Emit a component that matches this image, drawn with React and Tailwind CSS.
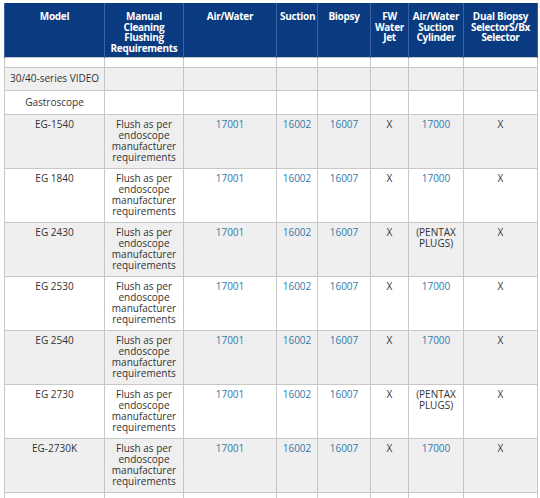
const headers = [
  "Model",
  "Manual Cleaning Flushing Requirements",
  "Air/Water",
  "Suction",
  "Biopsy",
  "FW Water Jet",
  "Air/Water Suction Cylinder",
  "Dual Biopsy SelectorS/Bx Selector",
];

const widths = ["w-[100px]", "w-[79px]", "w-[93px]", "w-[41px]", "w-[53px]", "w-[38px]", "w-[55px]", "w-[74px]"];

const models = [
  { name: "EG-1540", cyl: "17000" },
  { name: "EG 1840", cyl: "17000" },
  { name: "EG 2430", cyl: "(PENTAX PLUGS)" },
  { name: "EG 2530", cyl: "17000" },
  { name: "EG 2540", cyl: "17000" },
  { name: "EG 2730", cyl: "(PENTAX PLUGS)" },
  { name: "EG-2730K", cyl: "17000" },
];

const cell = "border border-[#c8c8c8] text-center px-1";
const top = `${cell} align-top pt-[4px]`;
const link = "text-[#3479ab]";

export default function App() {
  return (
    <div className="w-[540px] h-[498px] overflow-hidden bg-white pt-[3px] pl-[4px] font-['Open_Sans','Noto_Sans',sans-serif] text-[10px] leading-[11px] text-[#333]">
      <table className="table-fixed border-collapse w-[533px]">
        <colgroup>
          {widths.map((w, i) => (
            <col key={i} className={w} />
          ))}
        </colgroup>
        <thead>
          <tr className="h-[54px] bg-[#0a3a80]">
            {headers.map((h) => (
              <th
                key={h}
                className="border-x border-[#3a62a0] border-y-0 align-top text-center px-[3px] pt-[8px] font-bold text-white leading-[10.7px] tracking-[-0.3px]"
              >
                {h}
              </th>
            ))}
          </tr>
        </thead>
        <tbody>
          <tr className="h-[10px] bg-white">
            {headers.map((h) => (
              <td key={h} className={cell}></td>
            ))}
          </tr>
          <tr className="h-[23px] bg-[#efefef]">
            <td className={`${cell} align-middle whitespace-nowrap`}>30/40-series VIDEO</td>
            {headers.slice(1).map((h) => (
              <td key={h} className={cell}></td>
            ))}
          </tr>
          <tr className="h-[24px] bg-white">
            <td className={`${cell} align-middle`}>Gastroscope</td>
            {headers.slice(1).map((h) => (
              <td key={h} className={cell}></td>
            ))}
          </tr>
          {models.map((m, i) => (
            <tr key={m.name} className={`h-[54px] ${i % 2 === 0 ? "bg-[#efefef]" : "bg-white"}`}>
              <td className={top}>{m.name}</td>
              <td className={`${top} leading-[11.3px]`}>Flush as per endoscope manufacturer requirements</td>
              <td className={`${top} ${link}`}>17001</td>
              <td className={`${top} ${link}`}>16002</td>
              <td className={`${top} ${link}`}>16007</td>
              <td className={top}>X</td>
              <td className={`${top} ${m.cyl === "17000" ? link : ""}`}>{m.cyl}</td>
              <td className={top}>X</td>
            </tr>
          ))}
          <tr className="h-[20px] bg-white">
            {headers.map((h) => (
              <td key={h} className={cell}></td>
            ))}
          </tr>
        </tbody>
      </table>
    </div>
  );
}
